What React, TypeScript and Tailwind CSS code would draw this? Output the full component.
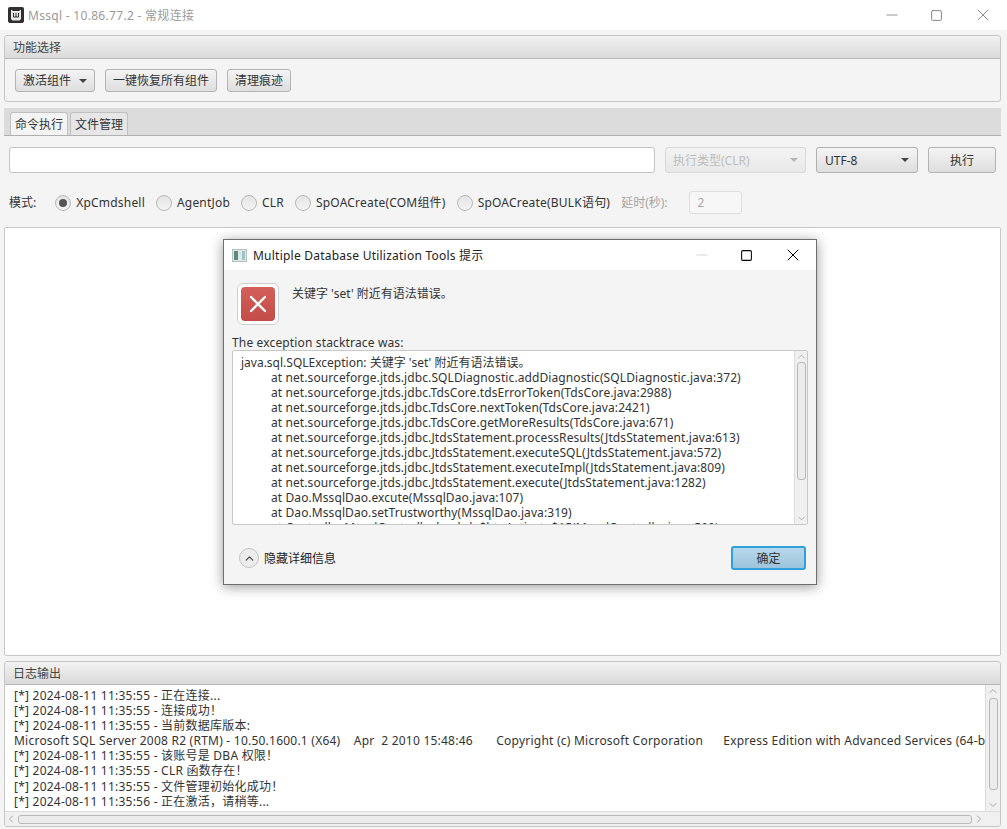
import { ChevronDown, ChevronLeft, ChevronRight, ChevronUp, Minus, Square, X } from "lucide-react";

const FONT = "[font-family:'Noto_Sans','Noto_Sans_CJK_SC',sans-serif]";

const trace = [
  "at net.sourceforge.jtds.jdbc.SQLDiagnostic.addDiagnostic(SQLDiagnostic.java:372)",
  "at net.sourceforge.jtds.jdbc.TdsCore.tdsErrorToken(TdsCore.java:2988)",
  "at net.sourceforge.jtds.jdbc.TdsCore.nextToken(TdsCore.java:2421)",
  "at net.sourceforge.jtds.jdbc.TdsCore.getMoreResults(TdsCore.java:671)",
  "at net.sourceforge.jtds.jdbc.JtdsStatement.processResults(JtdsStatement.java:613)",
  "at net.sourceforge.jtds.jdbc.JtdsStatement.executeSQL(JtdsStatement.java:572)",
  "at net.sourceforge.jtds.jdbc.JtdsStatement.executeImpl(JtdsStatement.java:809)",
  "at net.sourceforge.jtds.jdbc.JtdsStatement.execute(JtdsStatement.java:1282)",
  "at Dao.MssqlDao.excute(MssqlDao.java:107)",
  "at Dao.MssqlDao.setTrustworthy(MssqlDao.java:319)",
  "at Controller.MssqlController.lambda$btnActivate$15(MssqlController.java:590)",
];

const logs = [
  "[*] 2024-08-11 11:35:55 - 正在连接...",
  "[*] 2024-08-11 11:35:55 - 连接成功！",
  "[*] 2024-08-11 11:35:55 - 当前数据库版本:",
  "Microsoft SQL Server 2008 R2 (RTM) - 10.50.1600.1 (X64)    Apr  2 2010 15:48:46       Copyright (c) Microsoft Corporation      Express Edition with Advanced Services (64-bit)",
  "[*] 2024-08-11 11:35:55 - 该账号是 DBA 权限！",
  "[*] 2024-08-11 11:35:55 - CLR 函数存在！",
  "[*] 2024-08-11 11:35:55 - 文件管理初始化成功！",
  "[*] 2024-08-11 11:35:56 - 正在激活，请稍等...",
];

const modes = [
  { label: "XpCmdshell", checked: true },
  { label: "AgentJob" },
  { label: "CLR" },
  { label: "SpOACreate(COM组件)" },
  { label: "SpOACreate(BULK语句)" },
];

function Caret({ faded }: { faded?: boolean }) {
  return (
    <span
      className={`h-0 w-0 border-x-[4px] border-t-[4px] border-x-transparent ${
        faded ? "border-t-[#b5b5b5]" : "border-t-[#444]"
      }`}
    />
  );
}

function Btn({ children, className = "" }: { children: React.ReactNode; className?: string }) {
  return (
    <div
      className={`flex items-center justify-center rounded-[3px] border border-[#b4b4b4] bg-linear-to-b from-[#f4f4f4] to-[#dedede] text-[#333] ${className}`}
    >
      {children}
    </div>
  );
}

function PanelHeader({ title }: { title: string }) {
  return (
    <div className="flex h-[23px] items-center rounded-t-[3px] border-b border-[#b9b9b9] bg-linear-to-b from-[#f2f2f2] to-[#dadada] pl-[8px] text-[#444]">
      {title}
    </div>
  );
}

function Radio({ checked }: { checked?: boolean }) {
  return (
    <span className="flex size-[16px] items-center justify-center rounded-full border border-[#b8b8b8] bg-linear-to-b from-[#e4e4e4] to-[#f4f4f4]">
      {checked && <span className="size-[8px] rounded-full bg-[#555]" />}
    </span>
  );
}

export default function App() {
  return (
    <div className={`relative flex h-[829px] w-[1007px] flex-col overflow-hidden bg-[#f4f4f4] text-[12px] leading-[15px] ${FONT}`}>
      <div className="flex h-[30px] items-center bg-white pl-[8px]">
        <svg width="16" height="16" viewBox="0 0 16 16">
          <rect width="16" height="16" rx="2" fill="#2f2f2f" />
          <path d="M3 2.5l2 1.5h6l2-1.5V12l-1.5 1.5h-7L3 12z" fill="#e8e8e8" />
          <path d="M5.5 6v4h5V6M8 6v4" fill="none" stroke="#2f2f2f" />
        </svg>
        <span className="ml-[4px] tracking-[0.3px] text-[#9b9b9b]">Mssql - 10.86.77.2 - 常规连接</span>
        <div className="ml-auto flex items-center pr-[14px] text-[#777]">
          <Minus size={18} strokeWidth={1} className="mr-[29px]" />
          <Square size={13} strokeWidth={1.6} className="mr-[30px]" />
          <X size={20} strokeWidth={1} />
        </div>
      </div>

      <div className="ml-[4px] mr-[6px] mt-[5px] h-[67px] rounded-[3px] border border-[#c6c6c6]">
        <PanelHeader title="功能选择" />
        <div className="flex gap-[10px] pl-[10px] pt-[10px]">
          <Btn className="h-[23px] w-[80px] gap-[8px]">
            激活组件
            <Caret />
          </Btn>
          <Btn className="h-[23px] w-[112px]">一键恢复所有组件</Btn>
          <Btn className="h-[23px] w-[64px]">清理痕迹</Btn>
        </div>
      </div>

      <div className="ml-[4px] mr-[6px] mt-[6px] flex h-[28px] items-end gap-[2px] border-b border-[#b0b0b0] bg-[#dcdcdc] pl-[6px]">
        <div className="flex h-[23px] w-[58px] items-center justify-center rounded-t-[3px] border border-b-0 border-[#c0c0c0] bg-[#f4f4f4] text-[#333]">
          命令执行
        </div>
        <div className="flex h-[23px] w-[58px] items-center justify-center rounded-t-[3px] border border-b-0 border-[#c0c0c0] bg-[#e6e6e6] text-[#333]">
          文件管理
        </div>
      </div>

      <div className="mx-[9px] mt-[11px] flex h-[26px] gap-[10px]">
        <div className="w-[646px] rounded-[3px] border border-[#c2c2c2] bg-white" />
        <div className="flex w-[141px] items-center justify-between rounded-[3px] border border-[#dadada] bg-linear-to-b from-[#f4f4f4] to-[#e8e8e8] px-[7px] text-[#bdbdbd]">
          执行类型(CLR)
          <Caret faded />
        </div>
        <div className="flex w-[102px] items-center justify-between rounded-[3px] border border-[#b0b0b0] bg-linear-to-b from-[#f4f4f4] to-[#dedede] px-[8px] text-[#333]">
          UTF-8
          <Caret />
        </div>
        <Btn className="w-[68px]">执行</Btn>
      </div>

      <div className="mt-[18px] flex h-[23px] items-center pl-[9px] text-[#333]">
        <span className="mr-[19px]">模式:</span>
        {modes.map((m) => (
          <div key={m.label} className="mr-[11px] flex items-center gap-[5px] tracking-[0.2px]">
            <Radio checked={m.checked} />
            {m.label}
          </div>
        ))}
        <span className="text-[#a5a5a5]">延时(秒):</span>
        <div className="ml-[21px] flex h-[23px] w-[53px] items-center rounded-[3px] border border-[#dedede] bg-[#f7f7f7] pl-[8px] text-[#aaa]">
          2
        </div>
      </div>

      <div className="ml-[4px] mr-[6px] mt-[13px] h-[429px] rounded-[2px] border border-[#c8c8c8] bg-white" />

      <div className="ml-[4px] mr-[6px] mt-[5px] flex h-[166px] flex-col overflow-hidden rounded-[3px] border border-[#c6c6c6]">
        <PanelHeader title="日志输出" />
        <div className="flex min-h-0 flex-1">
          <div className="min-w-0 flex-1 overflow-hidden whitespace-pre bg-white pl-[9px] pt-[3px] leading-[15.1px] tracking-[0.23px] text-[#333]">
            {logs.map((l) => (
              <div key={l}>{l}</div>
            ))}
          </div>
          <div className="flex w-[15px] flex-col items-center border-l border-[#dcdcdc] bg-[#f0f0f0] text-[#aaa]">
            <ChevronUp size={12} />
            <div className="mt-[1px] h-[92px] w-[9px] rounded-[3px] border border-[#b8b8b8] bg-[#ececec]" />
            <div className="flex-1" />
            <ChevronDown size={12} />
          </div>
        </div>
        <div className="flex h-[15px] items-center border-t border-[#dcdcdc] bg-[#f0f0f0] text-[#aaa]">
          <ChevronLeft size={12} />
          <div className="mx-[1px] h-[9px] flex-1 rounded-[3px] border border-[#b8b8b8] bg-[#ececec]" />
          <ChevronRight size={12} />
          <div className="w-[15px]" />
        </div>
      </div>

      <div className="absolute left-[223px] top-[239px] flex h-[346px] w-[594px] flex-col border border-[#6e6e6e] bg-[#f4f4f4] shadow-[0_2px_12px_rgba(0,0,0,0.4)]">
        <div className="flex h-[30px] items-center bg-white pl-[8px] text-[#222]">
          <svg width="15" height="13" viewBox="0 0 15 13">
            <rect width="15" height="13" fill="#dfe8e8" stroke="#999" />
            <rect x="2" y="2" width="4" height="9" fill="#5c8a80" />
            <rect x="10" y="2" width="3" height="9" fill="#9fc4c8" />
          </svg>
          <span className="ml-[6px] tracking-[0.23px]">Multiple Database Utilization Tools 提示</span>
          <div className="ml-auto flex items-center pr-[13px]">
            <Minus size={18} strokeWidth={1} className="mr-[29px] text-[#c8c8c8]" />
            <Square size={13} strokeWidth={1.9} className="mr-[30px] text-black" />
            <X size={20} strokeWidth={1.2} className="text-black" />
          </div>
        </div>
        <div className="flex items-start pl-[13px] pt-[13px]">
          <div className="flex size-[42px] items-center justify-center rounded-[6px] border border-[#cfcfcf] bg-white">
            <div className="flex size-[34px] items-center justify-center rounded-[4px] bg-linear-to-b from-[#d4605a] to-[#c24c48]">
              <X size={28} strokeWidth={2} className="text-white" />
            </div>
          </div>
          <span className="ml-[13px] mt-[3px] text-[#333]">关键字 'set' 附近有语法错误。</span>
        </div>
        <div className="ml-[8px] mt-[10px] tracking-[0.15px] text-[#333]">The exception stacktrace was:</div>
        <div className="mx-[8px] flex h-[175px] overflow-hidden rounded-[2px] border border-[#c8c8c8] bg-white">
          <div className="min-w-0 flex-1 overflow-hidden whitespace-nowrap pl-[8px] pt-[4px] text-[#333]">
            <div>java.sql.SQLException: 关键字 'set' 附近有语法错误。</div>
            {trace.map((t) => (
              <div key={t} className="pl-[30px] tracking-[0.09px]">
                {t}
              </div>
            ))}
          </div>
          <div className="flex w-[13px] flex-col items-center border-l border-[#dcdcdc] bg-[#f0f0f0] text-[#aaa]">
            <ChevronUp size={11} />
            <div className="h-[118px] w-[9px] rounded-[3px] border border-[#b8b8b8] bg-[#ececec]" />
            <div className="flex-1" />
            <ChevronDown size={11} />
          </div>
        </div>
        <div className="flex flex-1 items-center pl-[15px] pr-[10px] pt-[7px]">
          <div className="flex size-[20px] items-center justify-center rounded-full border border-[#c4c4c4] bg-[#ececec]">
            <ChevronUp size={13} strokeWidth={2.2} className="text-[#444]" />
          </div>
          <span className="ml-[5px] text-[#222]">隐藏详细信息</span>
          <div className="ml-auto flex h-[24px] w-[75px] items-center justify-center rounded-[3px] border-2 border-[#2fa0d8] bg-linear-to-b from-[#b8d8ec] to-[#9cc4dc] text-[#333]">
            确定
          </div>
        </div>
      </div>
    </div>
  );
}
